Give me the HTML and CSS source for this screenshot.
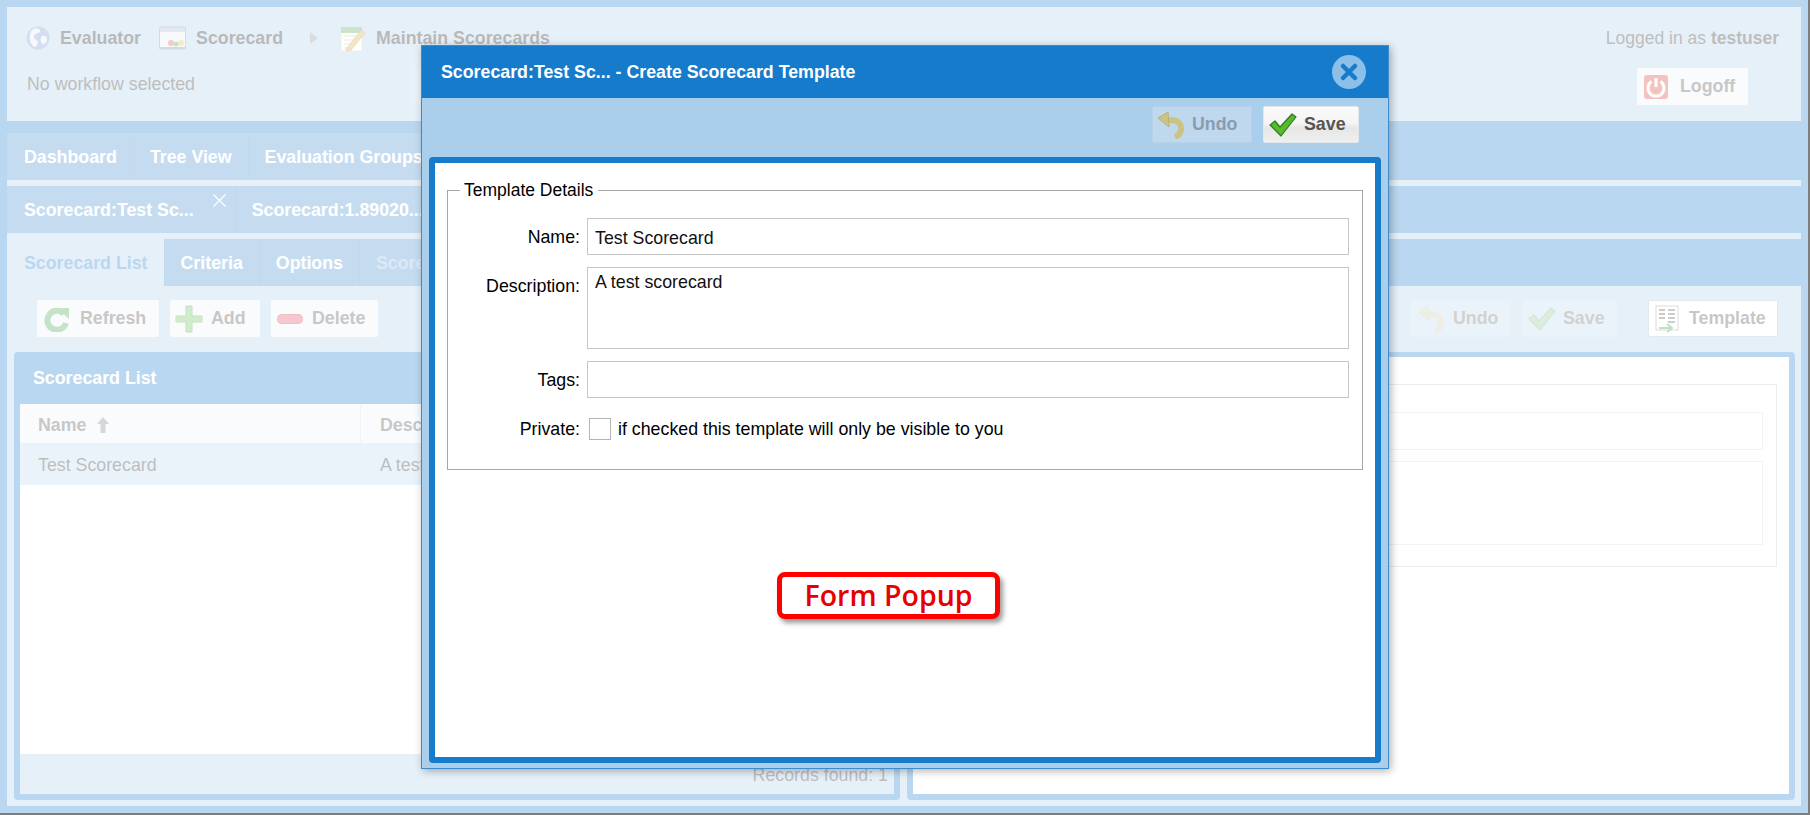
FILE: index.html
```html
<!DOCTYPE html>
<html lang="en">
<head>
    <meta charset="UTF-8">
    <title>Scorecard - Create Scorecard Template</title>
    <link rel="stylesheet" href="styles.css">
</head>
<body>
    <svg class="sprite" width="0" height="0">
        <symbol id="icon-undo" viewBox="0 0 28 28">
            <path d="M9 9 H14 C21 9 25 13 24 19 C23 23 21 25 18 26" fill="none" stroke="#cfbd62" stroke-width="6"/>
            <path d="M11 1 L1 7 L12 16 Z" fill="#cfbd62" stroke="#b5a650" stroke-width="1" stroke-linejoin="round"/>
        </symbol>
        <symbol id="icon-check" viewBox="0 0 28 24">
            <path d="M1 12 L6 8 L11 14 L23 1 L27 4 L12 23 Z" fill="#58b82e" stroke="#2f7d1c" stroke-width="1.2" stroke-linejoin="round"/>
        </symbol>
    </svg>

    <div id="app">
        <div id="header">
            <div class="header-left">
                <div class="breadcrumb">
                    <svg class="crumb-icon" width="24" height="24" viewBox="0 0 24 24">
                        <circle cx="12" cy="12" r="11.5" fill="#6f8fd0"/>
                        <path d="M7 3 C11 1 15 3 14 6 C12 8 9 7 8 10 C7 13 11 13 12 16 C12 19 10 21 8 21 C3 17 2 8 7 3 Z" fill="#dfe7f5"/>
                        <path d="M16 10 C19 9 21 11 21 14 C20 17 18 19 16 18 C14 15 14 12 16 10 Z" fill="#dfe7f5"/>
                    </svg>
                    <span class="crumb-text crumb-first">Evaluator</span>
                    <svg class="crumb-icon crumb-folder" width="27" height="24" viewBox="0 0 27 24">
                        <rect x="0.5" y="1" width="26" height="22" rx="1" fill="#9fb4d0" stroke="#6d84a6"/>
                        <rect x="1" y="6" width="25" height="16" fill="#e6ebf3"/>
                        <rect x="1" y="21" width="25" height="2" fill="#6d84a6"/>
                        <circle cx="12" cy="17" r="3" fill="#d9504a"/>
                        <circle cx="17" cy="18" r="2.5" fill="#3a9a4a"/>
                        <circle cx="22" cy="17" r="3" fill="#d9c23a"/>
                    </svg>
                    <span class="crumb-text">Scorecard</span>
                    <span class="crumb-arrow"></span>
                    <svg class="crumb-icon crumb-note" width="26" height="27" viewBox="0 0 26 27">
                        <rect x="1" y="3" width="21" height="23" fill="#fdfdf6" stroke="#c8c8c0"/>
                        <rect x="1" y="2" width="21" height="6" fill="#4ea84e"/>
                        <path d="M4 11 H18 M4 15 H14 M4 19 H12 M4 23 H11" stroke="#c9b98a" stroke-width="1"/>
                        <path d="M7 23 L21 5 L25 8 L11 25 L6 26 Z" fill="#d9a93c" stroke="#8c7330" stroke-width="0.7"/>
                    </svg>
                    <span class="crumb-text">Maintain Scorecards</span>
                </div>
                <div class="status-row">
                    <span class="status-text">No workflow selected</span>
                    <span class="status-sep"></span>
                    <span class="status-button"></span>
                </div>
            </div>
            <div class="header-right">
                <div class="user-text">Logged in as <b>testuser</b></div>
                <button class="tool-button logoff-button">
                    <svg width="24" height="24" viewBox="0 0 24 24">
                        <rect width="24" height="24" rx="3" fill="#d9362c"/>
                        <path d="M7.5 6.5 A8 8 0 1 0 16.5 6.5" fill="none" stroke="#fff" stroke-width="3"/>
                        <path d="M12 3 V12" stroke="#fff" stroke-width="3"/>
                    </svg>
                    Logoff
                </button>
            </div>
        </div>

        <div id="tabs">
            <div class="tab-row tab-row-first">
                <div class="tab">Dashboard</div>
                <div class="tab">Tree View</div>
                <div class="tab">Evaluation Groups</div>
            </div>
            <div class="tab-row">
                <div class="tab tab-closable">Scorecard:Test Sc...
                    <svg class="tab-close" width="13" height="13" viewBox="0 0 13 13">
                        <path d="M0.5 0.5 L12.5 12.5 M12.5 0.5 L0.5 12.5" stroke="#fff" stroke-width="1.2"/>
                    </svg>
                </div>
                <div class="tab">Scorecard:1.89020...</div>
            </div>
            <div class="tab-row">
                <div class="tab tab-active">Scorecard List</div>
                <div class="tab">Criteria</div>
                <div class="tab">Options</div>
                <div class="tab tab-disabled">Scorecard Tree</div>
            </div>
        </div>

        <div id="content">
            <div class="toolbar">
                <div class="toolbar-group">
                    <button class="tool-button btn-refresh">
                        <svg width="26" height="26" viewBox="0 0 26 26">
                            <path d="M20 8 A9.5 9.5 0 1 0 22 17" fill="none" stroke="#3aa04a" stroke-width="6"/>
                            <path d="M13 2 H25 V13 Z" fill="#3aa04a"/>
                        </svg>
                        Refresh
                    </button>
                    <button class="tool-button btn-add">
                        <svg width="28" height="28" viewBox="0 0 28 28">
                            <path d="M11 1 H17 V11 H27 V17 H17 V27 H11 V17 H1 V11 H11 Z" fill="#62c04e" stroke="#3e9a30" stroke-linejoin="round"/>
                        </svg>
                        Add
                    </button>
                    <button class="tool-button btn-delete">
                        <svg width="26" height="10" viewBox="0 0 26 10">
                            <rect x="0.5" y="0.5" width="25" height="9" rx="4" fill="#e0455a" stroke="#c02c40"/>
                        </svg>
                        Delete
                    </button>
                </div>
                <div class="toolbar-group">
                    <button class="tool-button tool-faded btn-undo">
                        <svg width="28" height="28"><use href="#icon-undo"/></svg>
                        Undo
                    </button>
                    <button class="tool-button tool-faded btn-save">
                        <svg width="28" height="24"><use href="#icon-check"/></svg>
                        Save
                    </button>
                    <button class="tool-button tool-outlined">
                        <svg width="26" height="28" viewBox="0 0 26 28">
                            <rect x="1" y="1" width="22" height="24" fill="#fff" stroke="#8a8a8a"/>
                            <path d="M4 5 H10 M4 9 H10 M4 13 H10 M13 5 H20 M13 9 H20 M13 13 H20 M13 17 H20" stroke="#555" stroke-width="2"/>
                            <path d="M4 23 H16 M12 19 L17 23 L12 27" fill="none" stroke="#2f9a3a" stroke-width="2"/>
                        </svg>
                        Template
                    </button>
                </div>
            </div>

            <div class="panels">
                <div class="panel">
                    <div class="panel-title">Scorecard List</div>
                    <div class="grid-head">
                        <div class="grid-cell grid-name">Name
                            <svg class="sort-arrow" width="12" height="16" viewBox="0 0 12 16">
                                <path d="M6 0 L12 7 H8.5 V16 H3.5 V7 H0 Z" fill="#777"/>
                            </svg>
                        </div>
                        <div class="grid-cell grid-desc">Description</div>
                    </div>
                    <div class="grid-row">
                        <div class="grid-cell grid-name">Test Scorecard</div>
                        <div class="grid-cell grid-desc">A test scorecard</div>
                    </div>
                    <div class="grid-fill"></div>
                    <div class="grid-footer">Records found: 1</div>
                </div>
                <div class="panel panel-detail">
                    <div class="detail-box">
                        <div class="detail-input"></div>
                        <div class="detail-input detail-area"></div>
                    </div>
                </div>
            </div>
        </div>

        <div id="overlay"></div>

        <div id="popup">
            <div class="popup-title">
                <span>Scorecard:Test Sc... - Create Scorecard Template</span>
                <svg class="popup-close" width="34" height="34" viewBox="0 0 34 34">
                    <circle cx="17" cy="17" r="17" fill="#8cc0e8"/>
                    <path d="M11 11 L23 23 M23 11 L11 23" stroke="#167bcb" stroke-width="4.5" stroke-linecap="round"/>
                </svg>
            </div>
            <div class="popup-toolbar">
                <button class="tool-button popup-undo">
                    <svg width="28" height="28"><use href="#icon-undo"/></svg>
                    Undo
                </button>
                <button class="tool-button popup-save">
                    <svg width="28" height="24"><use href="#icon-check"/></svg>
                    Save
                </button>
            </div>
            <div class="popup-body">
                <fieldset class="details">
                    <legend>Template Details</legend>
                    <div class="form-grid">
                        <label class="form-label">Name:</label>
                        <input class="form-input" type="text" value="Test Scorecard">
                        <label class="form-label">Description:</label>
                        <textarea class="form-input form-area">A test scorecard</textarea>
                        <label class="form-label">Tags:</label>
                        <input class="form-input" type="text">
                        <label class="form-label form-label-check">Private:</label>
                        <div class="check-row">
                            <span class="check-box"></span>
                            <span>if checked this template will only be visible to you</span>
                        </div>
                    </div>
                </fieldset>
                <div class="callout">Form Popup</div>
            </div>
        </div>
    </div>
</body>
</html>
```

FILE: styles.css
```css
html, body {
    margin: 0;
    padding: 0;
    height: 100%;
    overflow: hidden;
}

body {
    font-family: "Liberation Sans", Arial, sans-serif;
    font-size: 17.8px;
    color: #000;
    background-color: #fff;
}

.sprite {
    position: absolute;
}

#app {
    position: relative;
    box-sizing: border-box;
    width: 1810px;
    height: 815px;
    padding: 7px;
    border-right: 2px solid #7d7d7d;
    border-bottom: 2px solid #7d7d7d;
    background-color: #167bcb;
    display: flex;
    flex-direction: column;
    overflow: hidden;
}

#overlay {
    position: absolute;
    inset: 0;
    background-color: rgba(255, 255, 255, 0.7);
    z-index: 5;
}

/* buttons */
.tool-button {
    display: flex;
    align-items: center;
    gap: 10px;
    box-sizing: border-box;
    height: 37px;
    padding: 0 0 0 6px;
    border: none;
    border-radius: 2px;
    background-color: #eef1f4;
    color: #444;
    font-family: inherit;
    font-size: 17.8px;
    font-weight: bold;
}

/* header */
#header {
    height: 114px;
    flex: none;
    box-sizing: border-box;
    padding: 18px 22px 0 19px;
    background-color: #a8cdeb;
    display: flex;
    justify-content: space-between;
}

.breadcrumb {
    display: flex;
    align-items: center;
    height: 26px;
    font-weight: bold;
    color: #111;
}

.crumb-text {
    margin-left: 10px;
}

.crumb-folder {
    margin-left: 18px;
}

.crumb-arrow {
    width: 0;
    height: 0;
    margin: 0 22px 0 27px;
    border-left: 8px solid #888;
    border-top: 6px solid transparent;
    border-bottom: 6px solid transparent;
}

.status-row {
    display: flex;
    align-items: center;
    margin-top: 15px;
    padding-left: 1px;
}

.status-text {
    width: 372px;
    color: #222;
}

.status-sep {
    width: 1px;
    height: 24px;
    background-color: #b9d4eb;
}

.status-button {
    width: 40px;
    height: 37px;
    margin-left: 11px;
    background-color: #b9d4eb;
}

.header-right {
    display: flex;
    flex-direction: column;
    align-items: flex-end;
}

.user-text {
    height: 26px;
    line-height: 26px;
    font-size: 17.5px;
    color: #222;
}

.logoff-button {
    width: 111px;
    margin-top: 17px;
    margin-right: 31px;
    padding-left: 7px;
    gap: 12px;
}

/* tabs */
#tabs {
    flex: none;
    background-color: #a8cdeb;
}

.tab-row {
    display: flex;
    height: 47px;
    margin-bottom: 6px;
    background-color: #167bcb;
}

.tab-row:last-child {
    margin-bottom: 0;
}

.tab-row-first {
    padding-top: 12px;
}

.tab {
    position: relative;
    display: flex;
    align-items: center;
    padding: 2px 16px 0;
    border-right: 1px solid #2f80c9;
    background-color: #3e8acd;
    color: #fff;
    font-weight: bold;
    white-space: nowrap;
}

.tab:first-child {
    padding-left: 17px;
}

.tab-closable {
    padding-right: 41px;
}

.tab-close {
    position: absolute;
    top: 8px;
    right: 9px;
}

.tab-active {
    background-color: #a8cdeb;
    color: #167bcb;
}

.tab-disabled {
    color: #8ab6df;
}

/* content */
#content {
    flex: 1;
    min-height: 0;
    box-sizing: border-box;
    padding: 14px 0 6px;
    background-color: #a8cdeb;
    display: flex;
    flex-direction: column;
}

.toolbar {
    display: flex;
    justify-content: space-between;
    height: 37px;
    flex: none;
    padding: 0 23px 0 30px;
    margin-bottom: 15px;
}

.toolbar-group {
    display: flex;
    gap: 11px;
}

.btn-refresh {
    width: 122px;
    padding-left: 7px;
}

.btn-add {
    width: 90px;
    padding-left: 5px;
    gap: 8px;
}

.btn-delete {
    width: 107px;
    gap: 9px;
}

.btn-undo {
    width: 100px;
    gap: 8px;
}

.btn-save {
    width: 95px;
    gap: 7px;
}

.tool-faded svg {
    opacity: 0.5;
}

.tool-faded {
    background-color: #b9d6ec;
    color: #666;
}

.tool-outlined {
    width: 130px;
    margin-left: 20px;
    gap: 8px;
    border: 1px solid #9fb4c8;
    background-color: #fff;
}

.panels {
    flex: 1;
    min-height: 0;
    display: flex;
    gap: 7px;
    padding: 0 6px 0 7px;
}

.panel {
    box-sizing: border-box;
    width: 886px;
    flex: none;
    display: flex;
    flex-direction: column;
    border: 6px solid #167bcb;
    border-top: 0;
    border-radius: 4px;
    background-color: #fff;
}

.panel-title {
    height: 52px;
    flex: none;
    line-height: 52px;
    padding-left: 13px;
    background-color: #167bcb;
    color: #fff;
    font-weight: bold;
}

.grid-head, .grid-row {
    display: flex;
    flex: none;
    color: #222;
}

.grid-head {
    height: 39px;
    line-height: 42px;
    font-weight: bold;
    background-color: #eef2f6;
    color: #444;
}

.grid-row {
    height: 42px;
    line-height: 45px;
    background-color: #bbd8ef;
}

.grid-cell {
    padding: 0 18px;
}

.grid-desc {
    padding-left: 19px;
}

.grid-name {
    box-sizing: border-box;
    width: 341px;
    border-right: 1px solid #d5dbe2;
}

.grid-row .grid-name {
    border-right: 0;
}

.sort-arrow {
    margin-left: 6px;
    vertical-align: -2px;
}

.grid-fill {
    flex: 1;
}

.grid-footer {
    height: 40px;
    flex: none;
    box-sizing: border-box;
    line-height: 43px;
    padding-right: 6px;
    text-align: right;
    background-color: #a8cdeb;
    color: #222;
}

.panel-detail {
    flex: 1;
    width: auto;
    border-top: 5px solid #167bcb;
    padding: 27px 12px 0 0;
}

.detail-box {
    box-sizing: border-box;
    height: 183px;
    padding: 27px 13px 0 100px;
    border: 1px solid #c4c4c4;
}

.detail-input {
    box-sizing: border-box;
    height: 38px;
    margin-bottom: 11px;
    border: 1px solid #d8d8d8;
}

.detail-area {
    height: 84px;
}

/* popup */
#popup {
    position: absolute;
    top: 45px;
    left: 421px;
    z-index: 10;
    box-sizing: border-box;
    width: 968px;
    height: 724px;
    display: flex;
    flex-direction: column;
    border: 1px solid #3f8bc9;
    background-color: #a9cfec;
    box-shadow: 2px 2px 8px rgba(0, 0, 0, 0.3);
}

.popup-title {
    height: 52px;
    flex: none;
    display: flex;
    align-items: center;
    justify-content: space-between;
    padding: 0 22px 0 19px;
    background-color: #167bcb;
    color: #fff;
    font-weight: bold;
}

.popup-toolbar {
    height: 59px;
    flex: none;
    display: flex;
    justify-content: flex-end;
    gap: 11px;
    padding: 8px 29px 0 0;
    box-sizing: border-box;
}

.popup-undo {
    width: 100px;
    padding-left: 4px;
    gap: 7px;
    background-color: #bfd8ed;
    color: #8a9cb0;
    border: 1px solid #b5d2ea;
}

.popup-undo svg {
    opacity: 0.75;
}

.popup-save {
    width: 96px;
    padding-left: 5px;
    gap: 7px;
    color: #555;
    border: 1px solid #dfe8ef;
    background: linear-gradient(#fafafa, #f5f5f5 45%, #e6e6e6 60%, #f0f0f0);
}

.popup-body {
    position: relative;
    flex: 1;
    min-height: 0;
    margin: 0 7px 5px;
    border: 6px solid #167bcb;
    border-radius: 4px;
    background-color: #fff;
}

fieldset.details {
    box-sizing: border-box;
    height: 290px;
    margin: 17px 12px 0;
    padding: 17px 13px 0 0;
    border: 1px solid #a6a6a6;
}

.details legend {
    margin-left: 12px;
    padding: 0 5px 0 4px;
    font-size: 17.5px;
}

.form-grid {
    display: grid;
    grid-template-columns: 132px 1fr;
    column-gap: 7px;
    row-gap: 12px;
}

.form-label {
    height: 37px;
    text-align: right;
    line-height: 39px;
}

.form-input {
    box-sizing: border-box;
    width: 100%;
    height: 37px;
    margin: 0;
    padding: 3px 7px 0;
    border: 1px solid #c6c6c6;
    outline: none;
    resize: none;
    font-family: inherit;
    font-size: 17.8px;
    color: #111;
}

.form-area {
    display: block;
    height: 82px;
    padding-top: 4px;
}

.check-row {
    display: flex;
    align-items: center;
    height: 22px;
    margin-top: 8px;
}

.form-label-check {
    height: 22px;
    line-height: 22px;
    margin-top: 8px;
}

.check-box {
    box-sizing: border-box;
    width: 22px;
    height: 22px;
    margin: 0 7px 0 2px;
    border: 1px solid #b5b5b5;
}

.callout {
    position: absolute;
    top: 409px;
    left: 342px;
    box-sizing: border-box;
    width: 223px;
    height: 47px;
    border: 5px solid #f00;
    border-radius: 8px;
    background-color: #fff;
    color: #e60000;
    box-shadow: 3px 4px 5px rgba(0, 0, 0, 0.4);
    font-family: "Open Sans", "Liberation Sans", sans-serif;
    font-size: 28.5px;
    font-weight: 600;
    line-height: 36px;
    text-align: center;
}
```
